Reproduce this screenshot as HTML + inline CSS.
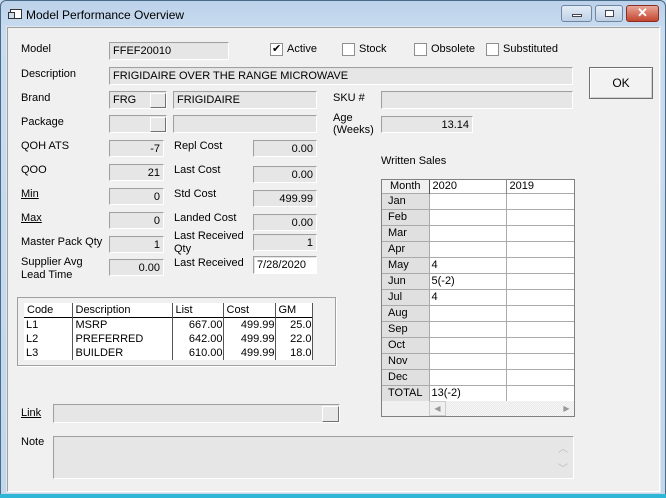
<!DOCTYPE html>
<html><head><meta charset="utf-8"><style>
*{margin:0;padding:0;box-sizing:border-box}
body{width:666px;height:498px;overflow:hidden;background:#c9dbee;font-family:"Liberation Sans",sans-serif;font-size:11px;color:#000;position:relative}
.a{position:absolute;white-space:nowrap}
.f{position:absolute;background:#e6e6e6;border-top:1px solid #a0a0a0;border-left:1px solid #a0a0a0;border-bottom:1px solid #fff;border-right:1px solid #fff;box-shadow:inset 1px 1px 0 #e3e3e3;padding:2px 3px;line-height:13px;white-space:nowrap;overflow:hidden}
.r{text-align:right}
.cb{position:absolute;width:13px;height:13px;border:1px solid #8e8f8f;background:#fff}
.btn{position:absolute;background:#e8e8e8;border:1px solid #fff;border-right-color:#707070;border-bottom-color:#707070}
u{text-decoration:underline}
table{border-collapse:collapse}
</style></head><body>
<!-- frame -->
<div class="a" style="left:0;top:0;width:666px;height:498px;border:1px solid #4a6a8a;border-radius:6px 6px 0 0;background:linear-gradient(#bcd2ea,#c9dcf0 30px,#c2d6ec)"></div>
<div class="a" style="left:0;top:494px;width:666px;height:4px;background:#2fb6d6"></div>
<div class="a" style="left:10px;top:9px;width:12px;height:10px;border:1px solid #333;background:#fff"></div>
<div class="a" style="left:8px;top:12px;width:7px;height:7px;border:1px solid #333;background:#cde"></div>
<div class="a" style="left:26px;top:8px;font-size:12px">Model Performance Overview</div>
<div class="a" style="left:561px;top:5px;width:31px;height:17px;border:1px solid #6f86a3;border-radius:3px;background:linear-gradient(#e4edf7,#bfd0e4)"><div class="a" style="left:10px;top:8px;width:10px;height:3px;background:#fff;border:1px solid #445"></div></div>
<div class="a" style="left:595px;top:5px;width:28px;height:17px;border:1px solid #6f86a3;border-radius:3px;background:linear-gradient(#e4edf7,#bfd0e4)"><div class="a" style="left:9px;top:4px;width:9px;height:7px;border:1px solid #445;background:#fff"></div></div>
<div class="a" style="left:626px;top:5px;width:33px;height:17px;border:1px solid #8a2e22;border-radius:3px;background:linear-gradient(#e8a696,#c4452f);color:#fff;font-weight:bold;font-size:13px;text-align:center;line-height:14px">✕</div>
<!-- client -->
<div class="a" style="left:7px;top:27px;width:653px;height:465px;background:#f0f0f0;border:1px solid #a0a0a0;border-right-color:#fff;border-bottom-color:#fff;box-shadow:0 0 0 1px #dfe7f0"></div>

<div class="a" style="left:21px;top:43px">Model</div>
<div class="f" style="left:109px;top:42px;width:120px;height:18px">FFEF20010</div>
<div class="cb" style="left:270px;top:43px"><span class="a" style="left:1px;top:-2px;font-size:11px">✔</span></div><div class="a" style="left:287px;top:43px">Active</div>
<div class="cb" style="left:342px;top:43px"></div><div class="a" style="left:359px;top:43px">Stock</div>
<div class="cb" style="left:414px;top:43px"></div><div class="a" style="left:431px;top:43px">Obsolete</div>
<div class="cb" style="left:486px;top:43px"></div><div class="a" style="left:503px;top:43px">Substituted</div>

<div class="a" style="left:21px;top:68px">Description</div>
<div class="f" style="left:109px;top:67px;width:464px;height:18px">FRIGIDAIRE OVER THE RANGE MICROWAVE</div>
<div class="a" style="left:589px;top:67px;width:64px;height:32px;border:1px solid #707070;background:#f2f2f2;box-shadow:inset 1px 1px 0 #fff,inset -1px -1px 0 #cfcfcf;text-align:center;line-height:30px;font-size:12px">OK</div>

<div class="a" style="left:21px;top:92px">Brand</div>
<div class="f" style="left:109px;top:91px;width:58px;height:18px">FRG</div>
<div class="btn" style="left:150px;top:93px;width:16px;height:15px"></div>
<div class="f" style="left:173px;top:91px;width:144px;height:18px">FRIGIDAIRE</div>
<div class="a" style="left:333px;top:92px">SKU #</div>
<div class="f" style="left:381px;top:91px;width:192px;height:18px"></div>

<div class="a" style="left:21px;top:116px">Package</div>
<div class="f" style="left:109px;top:115px;width:58px;height:18px"></div>
<div class="btn" style="left:150px;top:117px;width:16px;height:15px"></div>
<div class="f" style="left:173px;top:115px;width:144px;height:18px"></div>
<div class="a" style="left:333px;top:112px;line-height:12px">Age<br>(Weeks)</div>
<div class="f r" style="left:381px;top:116px;width:92px;height:17px">13.14</div>

<div class="a" style="left:21px;top:140px">QOH ATS</div>
<div class="f r" style="left:109px;top:140px;width:55px;height:17px">-7</div>
<div class="a" style="left:21px;top:164px">QOO</div>
<div class="f r" style="left:109px;top:164px;width:55px;height:17px">21</div>
<div class="a" style="left:21px;top:188px"><u>Min</u></div>
<div class="f r" style="left:109px;top:188px;width:55px;height:17px">0</div>
<div class="a" style="left:21px;top:212px"><u>Max</u></div>
<div class="f r" style="left:109px;top:212px;width:55px;height:17px">0</div>
<div class="a" style="left:21px;top:236px">Master Pack Qty</div>
<div class="f r" style="left:109px;top:236px;width:55px;height:17px">1</div>
<div class="a" style="left:21px;top:256px;line-height:13px">Supplier Avg<br>Lead Time</div>
<div class="f r" style="left:109px;top:259px;width:55px;height:17px">0.00</div>

<div class="a" style="left:174px;top:140px">Repl Cost</div>
<div class="f r" style="left:253px;top:140px;width:64px;height:17px">0.00</div>
<div class="a" style="left:174px;top:164px">Last Cost</div>
<div class="f r" style="left:253px;top:166px;width:64px;height:17px">0.00</div>
<div class="a" style="left:174px;top:188px">Std Cost</div>
<div class="f r" style="left:253px;top:190px;width:64px;height:17px">499.99</div>
<div class="a" style="left:174px;top:212px">Landed Cost</div>
<div class="f r" style="left:253px;top:214px;width:64px;height:17px">0.00</div>
<div class="a" style="left:174px;top:230px;line-height:13px">Last Received<br>Qty</div>
<div class="f r" style="left:253px;top:234px;width:64px;height:17px">1</div>
<div class="a" style="left:174px;top:257px">Last Received</div>
<div class="f" style="left:253px;top:256px;width:64px;height:18px;background:#fff">7/28/2020</div>

<!-- price list -->
<div class="a" style="left:17px;top:297px;width:319px;height:69px;border:1px solid #a0a0a0;box-shadow:1px 1px 0 #fff"></div>
<div class="a" style="left:24px;top:303px;background:#fff">
<table style="font-size:11px;line-height:14px">
<tr style="border-bottom:1px solid #000"><td style="width:48px;padding-left:3px;border-right:1px solid #555">Code</td><td style="width:100px;padding-left:3px;border-right:1px solid #555">Description</td><td style="width:51px;padding-left:3px;border-right:1px solid #555">List</td><td style="width:52px;padding-left:3px;border-right:1px solid #555">Cost</td><td style="width:37px;padding-left:3px;border-right:1px solid #555">GM</td></tr>
<tr><td style="padding-left:2px;border-right:1px solid #555">L1</td><td style="padding-left:3px;border-right:1px solid #555">MSRP</td><td class="r" style="border-right:1px solid #555">667.00</td><td class="r" style="border-right:1px solid #555">499.99</td><td class="r" style="border-right:1px solid #555">25.0</td></tr>
<tr><td style="padding-left:2px;border-right:1px solid #555">L2</td><td style="padding-left:3px;border-right:1px solid #555">PREFERRED</td><td class="r" style="border-right:1px solid #555">642.00</td><td class="r" style="border-right:1px solid #555">499.99</td><td class="r" style="border-right:1px solid #555">22.0</td></tr>
<tr><td style="padding-left:2px;border-right:1px solid #555">L3</td><td style="padding-left:3px;border-right:1px solid #555">BUILDER</td><td class="r" style="border-right:1px solid #555">610.00</td><td class="r" style="border-right:1px solid #555">499.99</td><td class="r" style="border-right:1px solid #555">18.0</td></tr>
</table></div>

<!-- written sales -->
<div class="a" style="left:381px;top:155px">Written Sales</div>
<div class="a" style="left:381px;top:179px;width:194px;height:238px;border:1px solid #808080;background:#f0f0f0">
<table style="font-size:11px;line-height:15px;background:#fff">
<tr style="border-bottom:1px solid #000"><td style="width:47px;text-align:center;background:#f0f0f0;border-right:1px solid #555;line-height:13px">Month</td><td style="width:77px;padding-left:3px;border-right:1px solid #888;line-height:13px">2020</td><td style="width:68px;padding-left:3px;line-height:13px">2019</td></tr>
<tr><td style="background:#e0e0e0;padding-left:6px;border:1px solid #aaa;border-left:0">Jan</td><td style="border:1px solid #aaa"></td><td style="border:1px solid #aaa;border-right:0"></td></tr>
<tr><td style="background:#e0e0e0;padding-left:6px;border:1px solid #aaa;border-left:0">Feb</td><td style="border:1px solid #aaa"></td><td style="border:1px solid #aaa;border-right:0"></td></tr>
<tr><td style="background:#e0e0e0;padding-left:6px;border:1px solid #aaa;border-left:0">Mar</td><td style="border:1px solid #aaa"></td><td style="border:1px solid #aaa;border-right:0"></td></tr>
<tr><td style="background:#e0e0e0;padding-left:6px;border:1px solid #aaa;border-left:0">Apr</td><td style="border:1px solid #aaa"></td><td style="border:1px solid #aaa;border-right:0"></td></tr>
<tr><td style="background:#e0e0e0;padding-left:6px;border:1px solid #aaa;border-left:0">May</td><td style="border:1px solid #aaa;padding-left:2px">4</td><td style="border:1px solid #aaa;border-right:0"></td></tr>
<tr><td style="background:#e0e0e0;padding-left:6px;border:1px solid #aaa;border-left:0">Jun</td><td style="border:1px solid #aaa;padding-left:2px">5(-2)</td><td style="border:1px solid #aaa;border-right:0"></td></tr>
<tr><td style="background:#e0e0e0;padding-left:6px;border:1px solid #aaa;border-left:0">Jul</td><td style="border:1px solid #aaa;padding-left:2px">4</td><td style="border:1px solid #aaa;border-right:0"></td></tr>
<tr><td style="background:#e0e0e0;padding-left:6px;border:1px solid #aaa;border-left:0">Aug</td><td style="border:1px solid #aaa"></td><td style="border:1px solid #aaa;border-right:0"></td></tr>
<tr><td style="background:#e0e0e0;padding-left:6px;border:1px solid #aaa;border-left:0">Sep</td><td style="border:1px solid #aaa"></td><td style="border:1px solid #aaa;border-right:0"></td></tr>
<tr><td style="background:#e0e0e0;padding-left:6px;border:1px solid #aaa;border-left:0">Oct</td><td style="border:1px solid #aaa"></td><td style="border:1px solid #aaa;border-right:0"></td></tr>
<tr><td style="background:#e0e0e0;padding-left:6px;border:1px solid #aaa;border-left:0">Nov</td><td style="border:1px solid #aaa"></td><td style="border:1px solid #aaa;border-right:0"></td></tr>
<tr><td style="background:#e0e0e0;padding-left:6px;border:1px solid #aaa;border-left:0">Dec</td><td style="border:1px solid #aaa"></td><td style="border:1px solid #aaa;border-right:0"></td></tr>
<tr><td style="background:#e0e0e0;text-align:center;border:1px solid #aaa;border-left:0;border-bottom:0">TOTAL</td><td style="border:1px solid #aaa;padding-left:2px;border-bottom:0">13(-2)</td><td style="border-left:1px solid #aaa"></td></tr>
</table>
<div class="a" style="left:47px;top:221px;width:145px;height:15px;background:repeating-conic-gradient(#e8e8e8 0 25%,#f8f8f8 0 50%) 0 0/2px 2px">
<div class="a" style="left:0;top:0;width:17px;height:15px;background:#f0f0f0;border:1px solid #ccc;color:#999;font-size:8px;text-align:center;line-height:13px">◀</div>
<div class="a" style="right:0;top:0;width:15px;height:15px;color:#999;font-size:8px;text-align:center;line-height:15px">▶</div>
</div>
</div>

<div class="a" style="left:21px;top:407px"><u>Link</u></div>
<div class="f" style="left:53px;top:404px;width:287px;height:19px"></div>
<div class="btn" style="left:322px;top:406px;width:17px;height:16px"></div>

<div class="a" style="left:21px;top:436px">Note</div>
<div class="f" style="left:53px;top:436px;width:521px;height:43px"></div>
<div class="a" style="left:558px;top:440px;color:#bbb;font-size:10px">︿</div>
<div class="a" style="left:558px;top:460px;color:#bbb;font-size:10px">﹀</div>
</body></html>
